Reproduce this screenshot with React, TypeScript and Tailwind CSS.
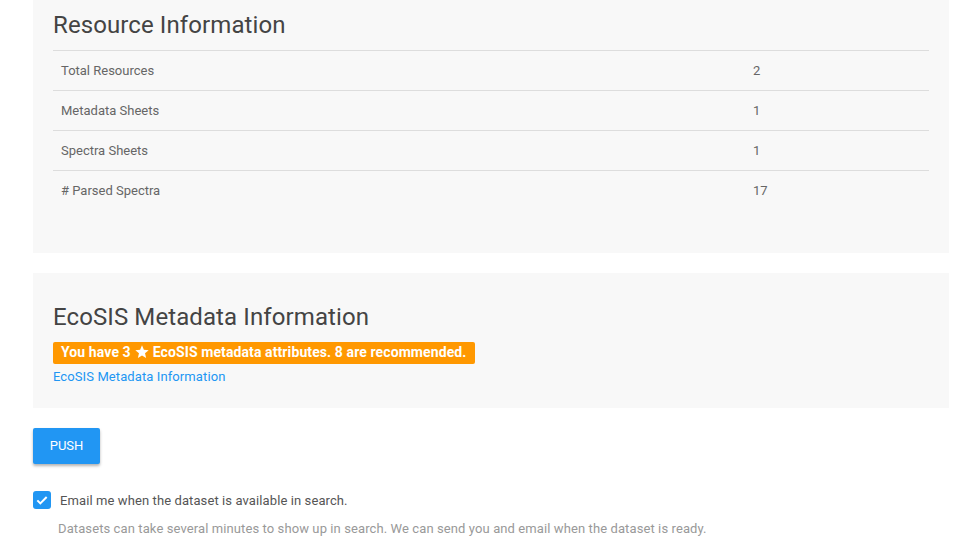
import React from "react";

const rows = [
  { label: "Total Resources", value: "2" },
  { label: "Metadata Sheets", value: "1" },
  { label: "Spectra Sheets", value: "1" },
  { label: "# Parsed Spectra", value: "17" },
];

function Star() {
  return (
    <svg viewBox="0 0 24 24" className="mx-[3px] inline-block h-[16px] w-[16px] -translate-y-[1px] fill-white">
      <path d="M12 17.27L18.18 21l-1.64-7.03L22 9.24l-7.19-.61L12 2 9.19 8.63 2 9.24l5.46 4.73L5.82 21z" />
    </svg>
  );
}

export default function App() {
  return (
    <div className="min-h-[556px] bg-white pl-[33px] pr-[28px] font-['Roboto',sans-serif]">
      <section className="bg-[#f8f8f8] px-5 pb-[42px] pt-[9px]">
        <h2 className="text-[24px] leading-[32px] tracking-[0.1px] text-[#444]">Resource Information</h2>
        <table className="mt-[9px] w-full border-collapse text-[13px] text-[#666]">
          <tbody>
            {rows.map((r, i) => (
              <tr key={r.label} className={i < rows.length - 1 ? "border-y border-[#ddd]" : "border-t border-[#ddd]"}>
                <td className="h-[40px] w-[692px] px-2 align-middle">{r.label}</td>
                <td className="h-[40px] px-2 align-middle">{r.value}</td>
              </tr>
            ))}
          </tbody>
        </table>
      </section>

      <section className="mt-5 bg-[#f8f8f8] px-5 pb-[22px] pt-[28px]">
        <h2 className="text-[24px] leading-[32px] tracking-[0.1px] text-[#444]">EcoSIS Metadata Information</h2>
        <div className="mt-[9px] flex">
          <span className="flex h-[22px] items-center rounded-[2px] bg-[#ff9800] px-2 text-[14px] font-bold tracking-[0.1px] text-white">
            You have 3 <Star /> EcoSIS metadata attributes. 8 are recommended.
          </span>
        </div>
        <a className="mt-[4px] block text-[13px] leading-[18px] tracking-[0.1px] text-[#2196f3]">EcoSIS Metadata Information</a>
      </section>

      <button className="mt-5 h-[36px] w-[67px] rounded-[2px] bg-[#2196f3] text-[13px] text-white shadow-[0_2px_3px_rgba(0,0,0,0.3)]">
        PUSH
      </button>

      <div className="mt-[27px] flex items-center">
        <span className="flex h-[18px] w-[18px] items-center justify-center rounded-[3px] bg-[#2196f3]">
          <svg viewBox="0 0 24 24" className="h-[16px] w-[16px]" fill="none" stroke="white" strokeWidth="3">
            <path d="M5 12.5l4.5 4.5L19 7.5" />
          </svg>
        </span>
        <span className="ml-[9px] text-[13px] tracking-[0.1px] text-[#555]">Email me when the dataset is available in search.</span>
      </div>
      <p className="ml-[25px] mt-[9px] text-[13px] tracking-[0.1px] text-[#999]">
        Datasets can take several minutes to show up in search. We can send you and email when the dataset is ready.
      </p>
    </div>
  );
}
